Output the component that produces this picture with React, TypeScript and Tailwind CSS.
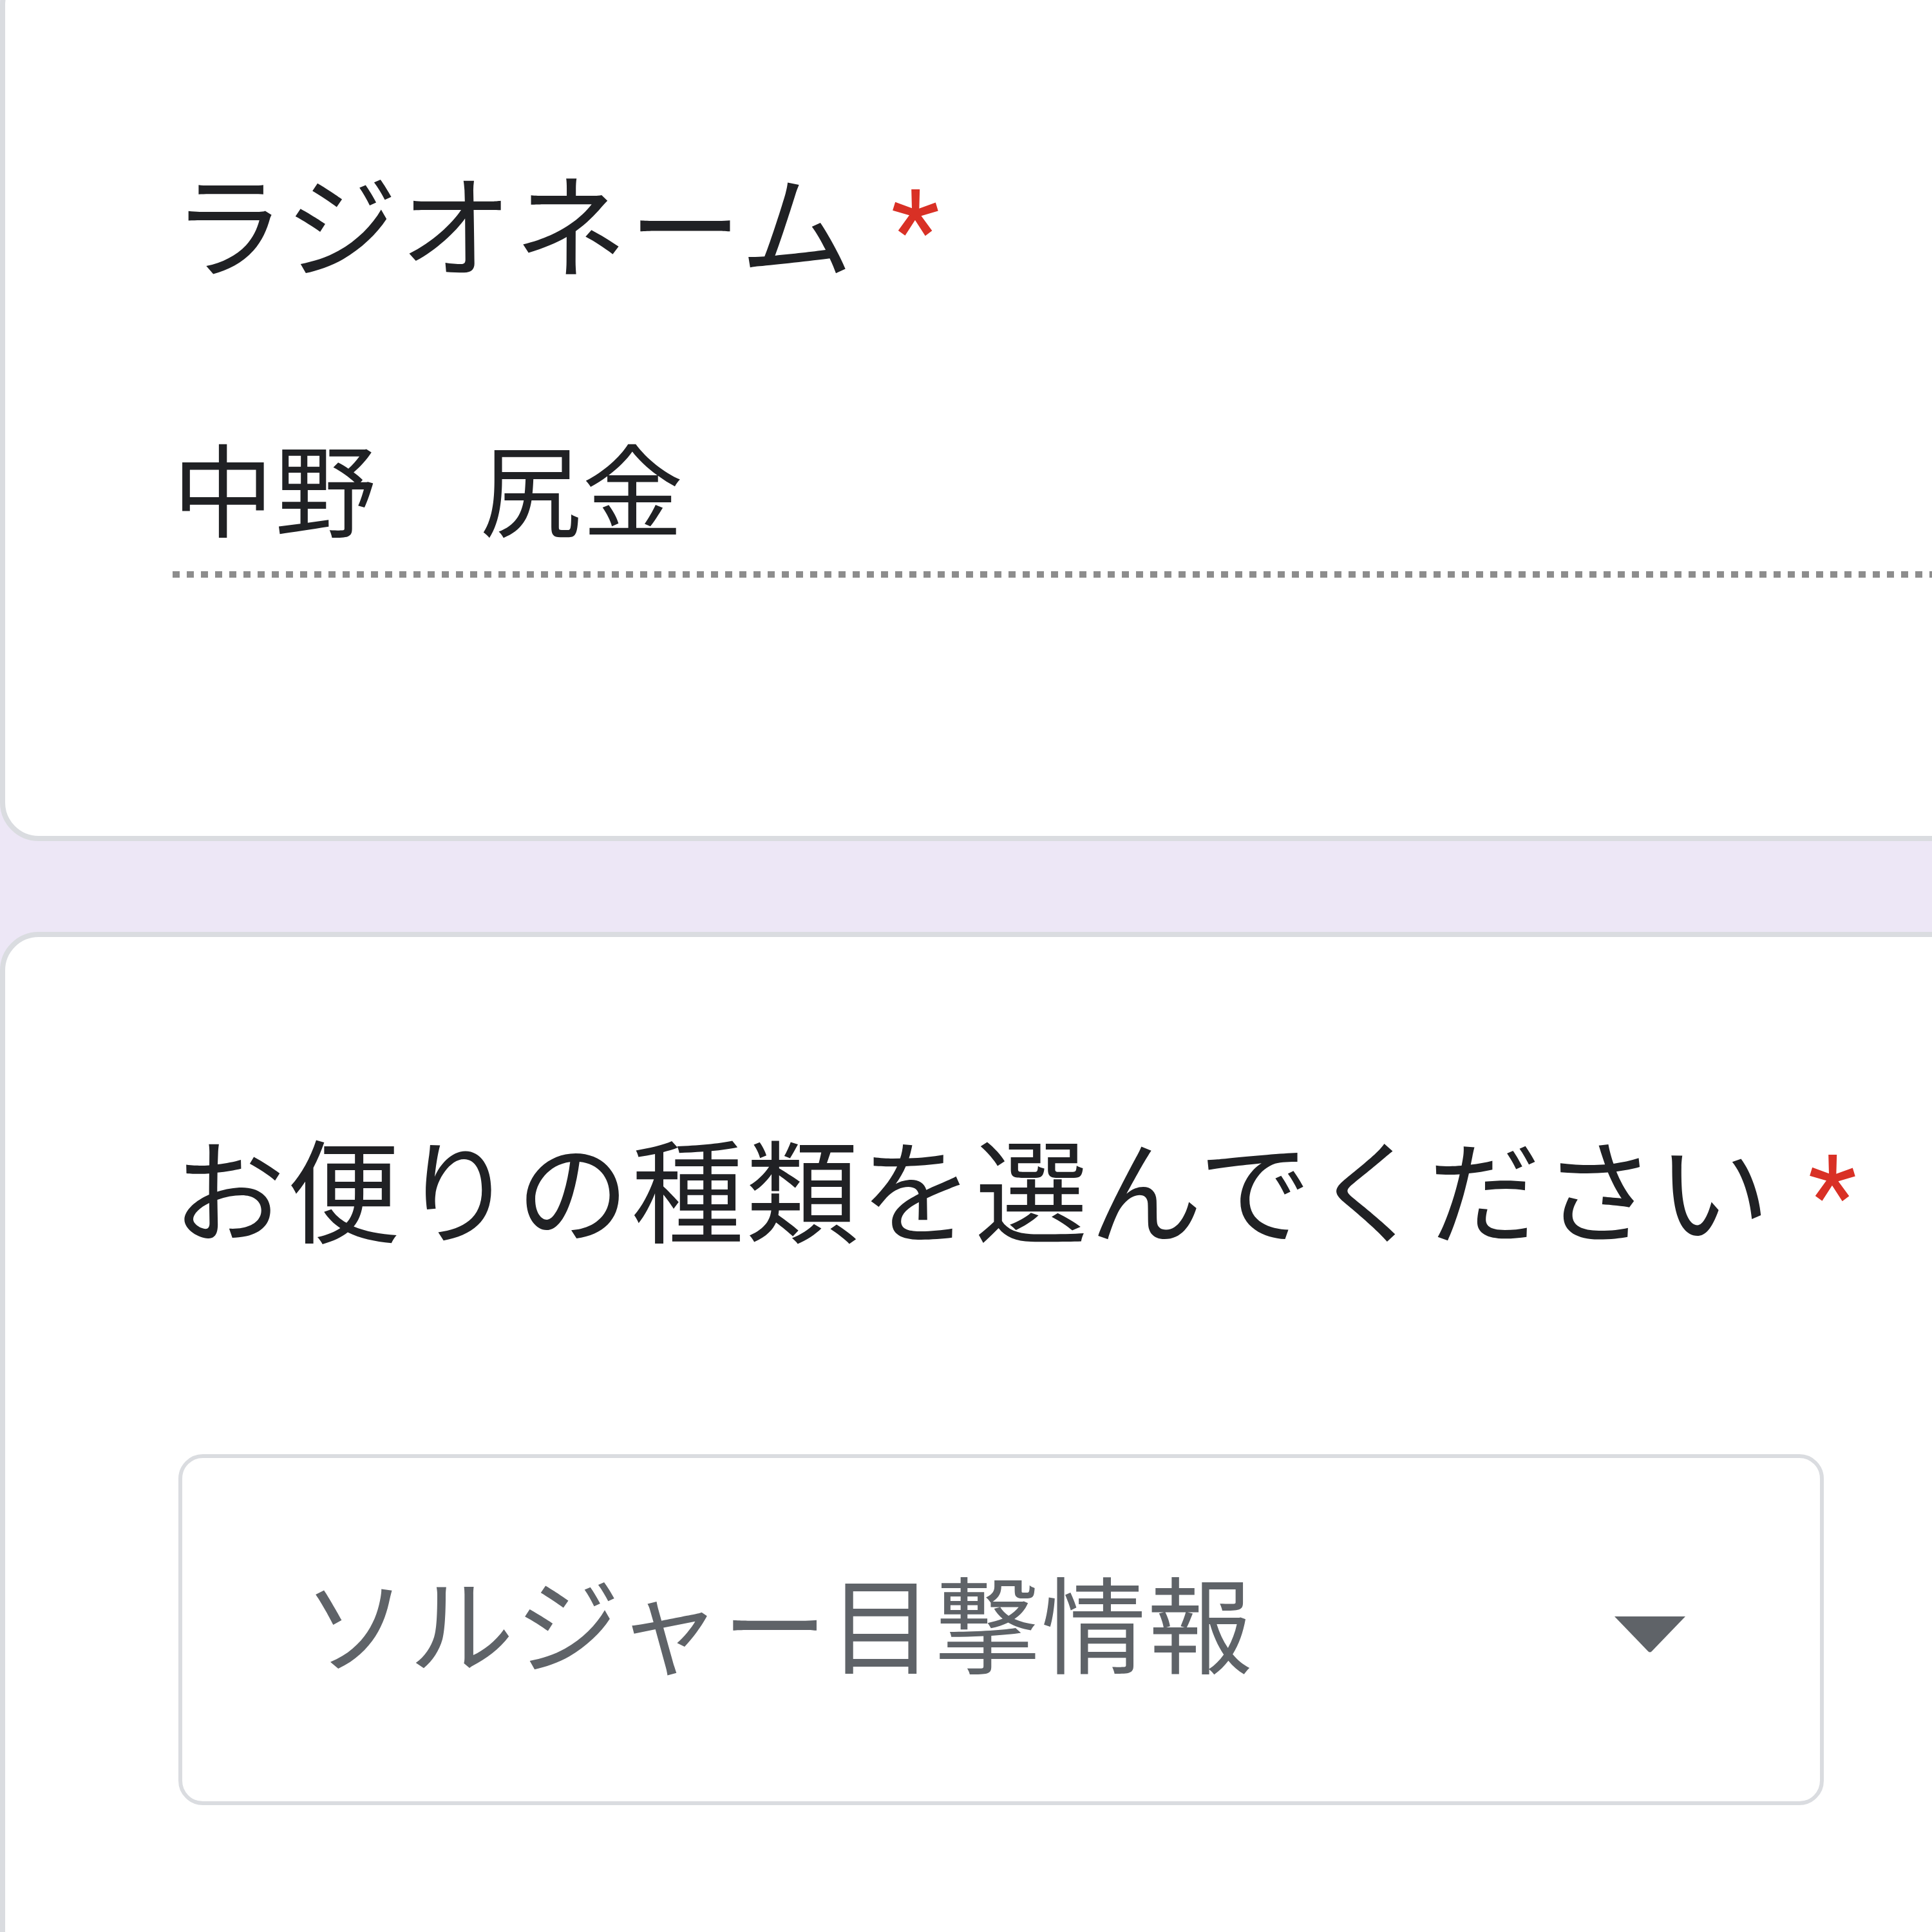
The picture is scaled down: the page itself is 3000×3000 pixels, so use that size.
import React from "react";

export default function App() {
  return (
    <div className="w-[3000px] h-[3000px] overflow-hidden bg-[#ede7f6] font-[Roboto,'Noto_Sans_CJK_JP',sans-serif]">
      {/* Card 1 */}
      <div className="-mt-[52px] w-[3100px] bg-white border-[8px] border-[#dadce0] rounded-[60px] pl-[260px] pt-[315px] pb-[401px] flex flex-col">
        <div className="text-[175px] leading-none tracking-[3px] text-[#202124] whitespace-nowrap">
          ラジオネーム
          <span className="ml-[10px] text-[#d93025]"> *</span>
        </div>
        <div className="mt-[244px] text-[157px] leading-none tracking-[2px] text-[#202124] whitespace-nowrap">
          中野　尻金
        </div>
        <div className="mt-[40px] h-[10px] w-[2900px] bg-[repeating-linear-gradient(to_right,#8d8d8d_0px,#8d8d8d_11px,transparent_11px,transparent_22px)]" />
      </div>

      {/* Card 2 */}
      <div className="mt-[141px] w-[3100px] h-[1800px] bg-white border-[8px] border-[#dadce0] rounded-[60px] pl-[260px] pt-[315px] flex flex-col">
        <div className="text-[175px] leading-none tracking-[3px] text-[#202124] whitespace-nowrap">
          お便りの種類を選んでください
          <span className="ml-[10px] text-[#d93025]"> *</span>
        </div>
        <div className="mt-[313px] ml-[9px] w-[2555px] h-[545px] border-[6px] border-[#dadce0] rounded-[38px] flex items-center justify-between pl-[187px] pr-[209px]">
          <span className="text-[163px] leading-none tracking-[2px] text-[#5f6368] whitespace-nowrap">
            ソルジャー目撃情報
          </span>
          <svg width="110" height="56" viewBox="0 0 110 56" className="mt-[14px]">
            <path d="M0 0 H110 L58 54 Q55 57 52 54 Z" fill="#5f6368" />
          </svg>
        </div>
      </div>
    </div>
  );
}
